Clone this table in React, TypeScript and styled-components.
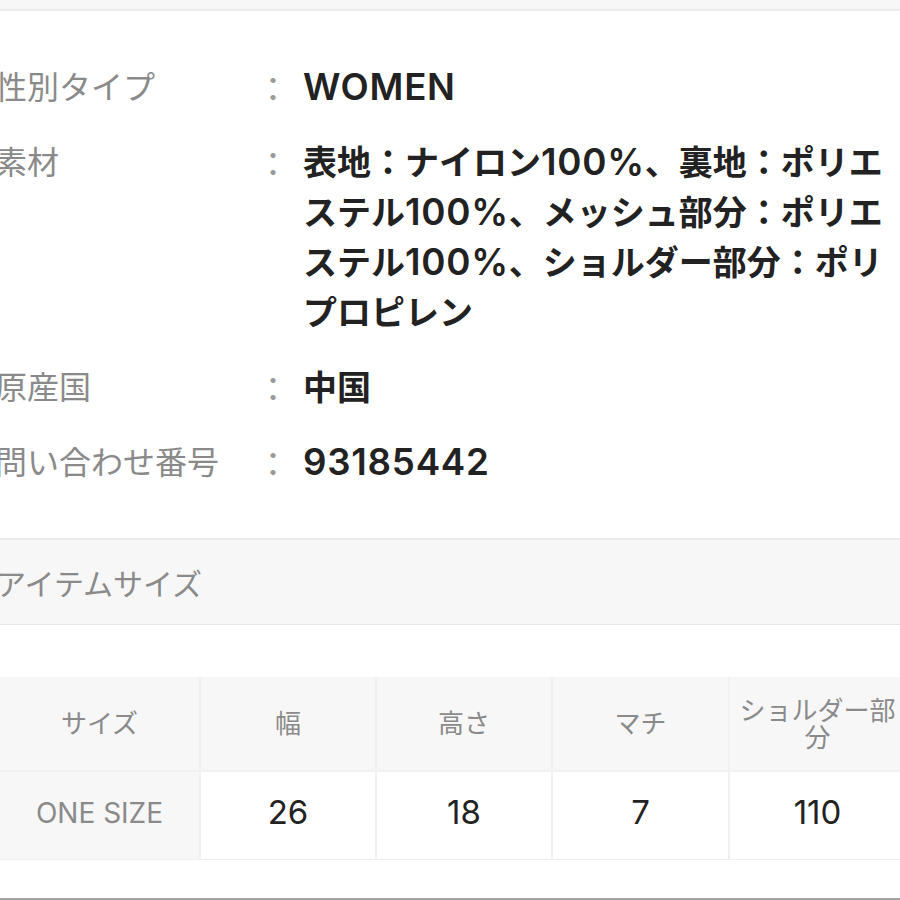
import React from "react";
import styled, { createGlobalStyle } from "styled-components";

const Global = createGlobalStyle`
  html, body { margin: 0; padding: 0; background: #ffffff; }
  body {
    width: 900px;
    height: 900px;
    overflow: hidden;
    font-family: Inter, "Noto Sans CJK JP", sans-serif;
    -webkit-font-smoothing: antialiased;
  }
`;

const Page = styled.div`
  width: 900px;
  height: 900px;
  display: flex;
  flex-direction: column;
  overflow: hidden;
  border-bottom: 2px solid #a3a3a3;
  box-sizing: border-box;
`;

const TopBand = styled.div`
  height: 9px;
  background: #f7f7f7;
  border-bottom: 2px solid #ebebeb;
  flex: none;
`;

const SpecList = styled.dl`
  margin: 52px 0 50px -5px;
  display: grid;
  grid-template-columns: 261px 34px 1fr;
  column-gap: 0;
  row-gap: 25px;
`;

const Label = styled.dt`
  margin: 0;
  font-size: 32px;
  line-height: 50px;
  color: #8a8a8a;
  font-weight: 400;
  white-space: nowrap;
`;

const Colon = styled.span`
  font-size: 34px;
  line-height: 50px;
  color: #9a9a9a;
  font-family: "Noto Sans CJK JP", sans-serif;
  text-align: center;
`;

const Value = styled.dd`
  margin: 0 0 0 13px;
  font-size: 34px;
  line-height: 50px;
  color: #222222;
  font-weight: 700;
`;

const Line = styled.div`
  white-space: nowrap;
  height: 50px;
`;

const Latin = styled.span`
  font-size: 1.08em;
  line-height: 1;
  font-weight: 600;
  letter-spacing: 0.02em;
`;

const SectionHead = styled.div`
  flex: none;
  height: 84px;
  display: flex;
  align-items: center;
  margin-left: -4px;
  background: #f7f7f7;
  border-top: 2px solid #ebebeb;
  border-bottom: 1px solid #e8e8e8;
  font-size: 30px;
  color: #8a8a8a;
`;

const SizeTable = styled.div`
  margin-top: 52px;
  display: grid;
  grid-template-columns: 199px 174px 174px 175px 175px;
  grid-template-rows: 93px 87px;
  gap: 2px;
  width: 910px;
  background: #f1f1f1;
  border-bottom: 1px solid #efefef;
  flex: none;
`;

const HeadCell = styled.div`
  background: #f7f7f7;
  display: flex;
  align-items: center;
  justify-content: center;
  text-align: center;
  font-size: 26px;
  line-height: 27px;
  color: #8a8a8a;
  padding: 0 6px;
`;

const RowHead = styled.div`
  background: #f7f7f7;
  display: flex;
  align-items: center;
  justify-content: center;
  font-size: 28px;
  color: #8a8a8a;
  padding-bottom: 6px;
`;

const DataCell = styled.div`
  background: #ffffff;
  display: flex;
  align-items: center;
  justify-content: center;
  font-size: 33px;
  color: #222222;
  padding-bottom: 8px;
`;

const specs: { label: string; lines: string[] }[] = [
  { label: "性別タイプ", lines: ["WOMEN"] },
  {
    label: "素材",
    lines: [
      "表地：ナイロン100%、裏地：ポリエ",
      "ステル100%、メッシュ部分：ポリエ",
      "ステル100%、ショルダー部分：ポリ",
      "プロピレン",
    ],
  },
  { label: "原産国", lines: ["中国"] },
  { label: "問い合わせ番号", lines: ["93185442"] },
];

const headers = ["サイズ", "幅", "高さ", "マチ", "ショルダー部分"];
const values = ["26", "18", "7", "110"];

function renderRuns(text: string) {
  const parts = text.split(/([A-Za-z0-9%]+)/).filter((p) => p.length > 0);
  return parts.map((p, i) =>
    /^[A-Za-z0-9%]+$/.test(p) ? <Latin key={i}>{p}</Latin> : <React.Fragment key={i}>{p}</React.Fragment>
  );
}

export default function App() {
  return (
    <>
      <Global />
      <Page>
        <TopBand />
        <SpecList>
          {specs.map((s) => (
            <React.Fragment key={s.label}>
              <Label>{s.label}</Label>
              <Colon>：</Colon>
              <Value>
                {s.lines.map((l) => (
                  <Line key={l}>{renderRuns(l)}</Line>
                ))}
              </Value>
            </React.Fragment>
          ))}
        </SpecList>
        <SectionHead>アイテムサイズ</SectionHead>
        <SizeTable>
          {headers.map((h) => (
            <HeadCell key={h}>{h}</HeadCell>
          ))}
          <RowHead>ONE SIZE</RowHead>
          {values.map((v) => (
            <DataCell key={v}>{v}</DataCell>
          ))}
        </SizeTable>
      </Page>
    </>
  );
}
